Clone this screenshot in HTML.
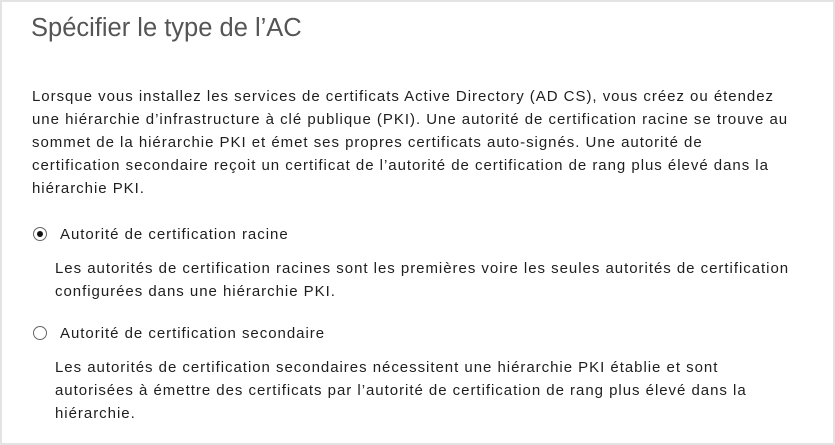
<!DOCTYPE html>
<html><head><meta charset="utf-8"><style>
body{margin:0;width:835px;height:445px;background:#fff;overflow:hidden;font-family:"Liberation Sans",sans-serif;color:#1e1e1e}
.frame{position:absolute;left:0;top:0;width:831px;height:441px;border:2px solid #e3e3e3}
.t{position:absolute;white-space:nowrap;font-size:15px;line-height:23px;letter-spacing:0.97px}
h1{position:absolute;left:31px;top:14px;margin:0;font-weight:normal;font-size:25.5px;color:#555;white-space:nowrap;letter-spacing:0px}
.r{position:absolute;width:12px;height:12px;border:1px solid #666;border-radius:50%;background:#fff}
.r.on::after{content:"";position:absolute;left:3px;top:3px;width:6px;height:6px;border-radius:50%;background:#111}
</style></head><body>
<div class="frame"></div>
<h1>Spécifier le type de l’AC</h1>
<div class="t" style="left:32px;top:85px">Lorsque vous installez les services de certificats Active Directory (AD CS), vous créez ou étendez<br>une hiérarchie d’infrastructure à clé publique (PKI). Une autorité de certification racine se trouve au<br>sommet de la hiérarchie PKI et émet ses propres certificats auto-signés. Une autorité de<br>certification secondaire reçoit un certificat de l’autorité de certification de rang plus élevé dans la<br>hiérarchie PKI.</div>
<div class="r on" style="left:33px;top:227px"></div>
<div class="t" style="left:60px;top:223px">Autorité de certification racine</div>
<div class="t" style="left:55px;top:257px">Les autorités de certification racines sont les premières voire les seules autorités de certification<br>configurées dans une hiérarchie PKI.</div>
<div class="r" style="left:33px;top:326px"></div>
<div class="t" style="left:60px;top:322px">Autorité de certification secondaire</div>
<div class="t" style="left:55px;top:356px">Les autorités de certification secondaires nécessitent une hiérarchie PKI établie et sont<br>autorisées à émettre des certificats par l’autorité de certification de rang plus élevé dans la<br>hiérarchie.</div>
</body></html>
